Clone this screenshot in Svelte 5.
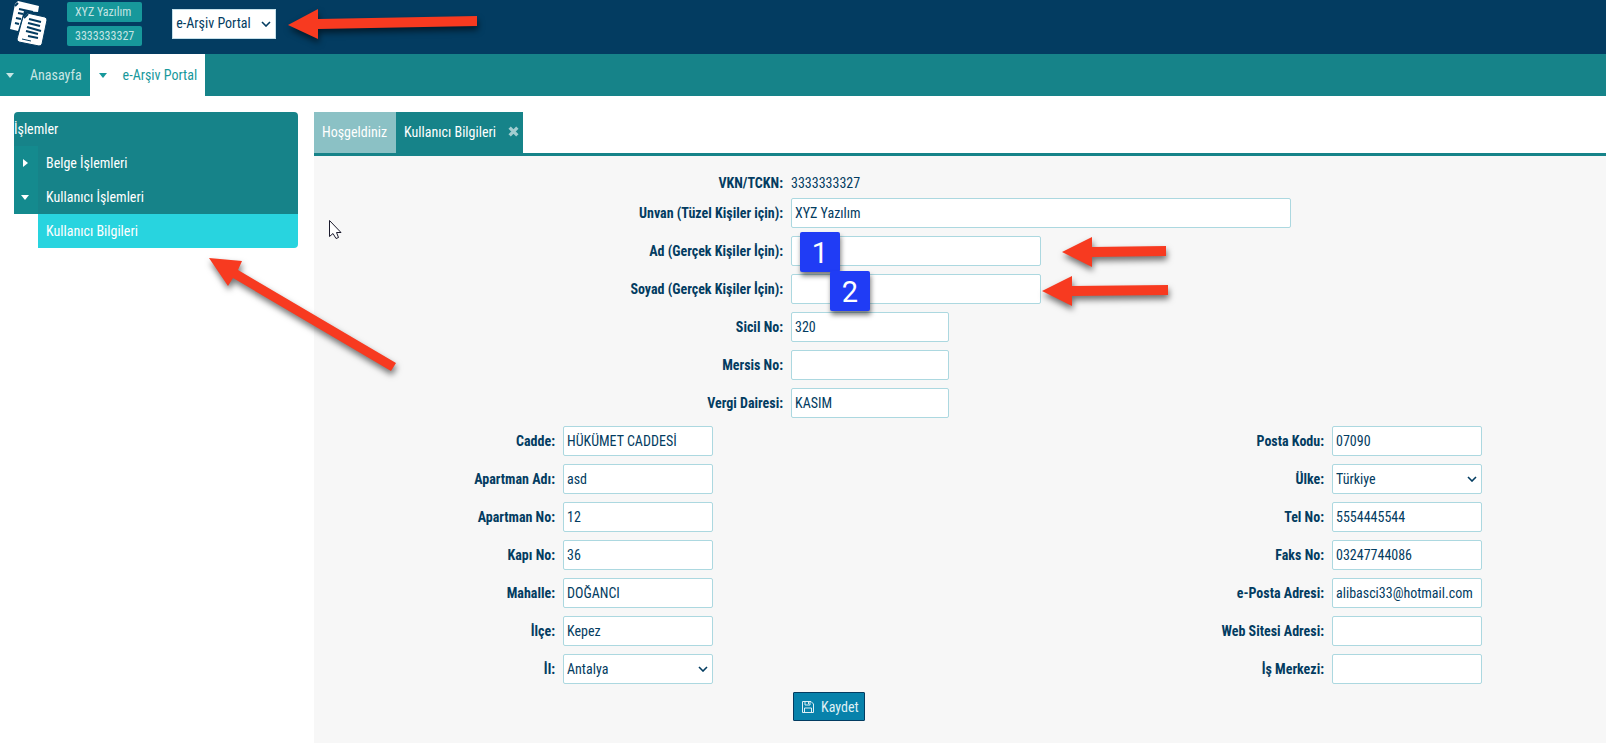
<script lang="ts">
  type Field = { id: string; label: string; value: string; size?: string; badge?: number; options?: string[] };

  const modules = ['e-Arşiv Portal', 'e-Fatura Portal'];

  let module = $state('e-Arşiv Portal');

  let general = $state<Field[]>([
    { id: 'unvan', label: 'Unvan (Tüzel Kişiler için):', value: 'XYZ Yazılım', size: 'wide' },
    { id: 'ad', label: 'Ad (Gerçek Kişiler İçin):', value: '', size: 'medium', badge: 1 },
    { id: 'soyad', label: 'Soyad (Gerçek Kişiler İçin):', value: '', size: 'medium', badge: 2 },
    { id: 'sicil', label: 'Sicil No:', value: '320', size: 'small' },
    { id: 'mersis', label: 'Mersis No:', value: '', size: 'small' },
    { id: 'vergi', label: 'Vergi Dairesi:', value: 'KASIM', size: 'small' }
  ]);

  // address fields run left, right, left, right
  let address = $state<Field[]>([
    { id: 'cadde', label: 'Cadde:', value: 'HÜKÜMET CADDESİ' },
    { id: 'posta', label: 'Posta Kodu:', value: '07090' },
    { id: 'apartman-adi', label: 'Apartman Adı:', value: 'asd' },
    { id: 'ulke', label: 'Ülke:', value: 'Türkiye', options: ['Türkiye'] },
    { id: 'apartman-no', label: 'Apartman No:', value: '12' },
    { id: 'tel', label: 'Tel No:', value: '5554445544' },
    { id: 'kapi', label: 'Kapı No:', value: '36' },
    { id: 'faks', label: 'Faks No:', value: '03247744086' },
    { id: 'mahalle', label: 'Mahalle:', value: 'DOĞANCI' },
    { id: 'eposta', label: 'e-Posta Adresi:', value: 'alibasci33@hotmail.com' },
    { id: 'ilce', label: 'İlçe:', value: 'Kepez' },
    { id: 'web', label: 'Web Sitesi Adresi:', value: '' },
    { id: 'il', label: 'İl:', value: 'Antalya', options: ['Antalya'] },
    { id: 'merkez', label: 'İş Merkezi:', value: '' }
  ]);
</script>

{#snippet chevron()}
  <svg class="chevron" viewBox="0 0 10 6" aria-hidden="true">
    <path d="M1 1l4 4 4-4" fill="none" stroke="currentColor" stroke-width="1.600" />
  </svg>
{/snippet}

<div class="page">
  <header class="topbar">
    <svg class="logo" viewBox="8 0 40 48" aria-hidden="true">
      <path d="M18 1L39 6L38 12L24 11L18 31L10 29L15 4Z" fill="#fff" />
      <path d="M15 6L18 3M19 9L33 12M18 13L23 14M16 18L21 19M15 23L19 24" stroke="#033c61" stroke-width="2" fill="none" />
      <path d="M27 13L45 17Q47 18 47 20L42 44Q41 46 39 46L19 42Q17 41 17 39L23 17Z" fill="#fff" stroke="#033c61" stroke-width="1" />
      <path
        d="M24 18L28 14M29 19L41 22M28 23L40 26M27 27L41 31M26 31L38 34M28 36L38 38"
        stroke="#033c61"
        stroke-width="2"
        fill="none"
      />
      <path d="M22 39L31 41" stroke="#033c61" stroke-width="1" />
    </svg>
    <div class="company">
      <span>XYZ Yazılım</span>
      <span>3333333327</span>
    </div>
    <div class="module">
      <select aria-label="Modül" bind:value={module}>
        {#each modules as name}
          <option>{name}</option>
        {/each}
      </select>
      {@render chevron()}
    </div>
  </header>

  <nav class="menu">
    <a href="#anasayfa"><i class="caret down"></i>Anasayfa</a>
    <a class="active" href="#earsiv"><i class="caret down"></i>e-Arşiv Portal</a>
  </nav>

  <div class="body">
    <aside class="sidebar">
      <h2>İşlemler</h2>
      <a class="item" href="#belge"><span class="toggle"><i class="caret right"></i></span>Belge İşlemleri</a>
      <a class="item" href="#kullanici"><span class="toggle"><i class="caret down"></i></span>Kullanıcı İşlemleri</a>
      <a class="sub" href="#bilgiler">Kullanıcı Bilgileri</a>
    </aside>

    <main>
      <div class="tabs">
        <button type="button" class="tab idle">Hoşgeldiniz</button>
        <div class="tab">
          <button type="button">Kullanıcı Bilgileri</button>
          <button type="button" class="close" aria-label="Kapat">
            <svg viewBox="0 0 10 10"><path d="M1.500 1.500l7 7M8.500 1.500l-7 7" stroke="currentColor" stroke-width="3" /></svg>
          </button>
        </div>
      </div>

      <form onsubmit={(e) => e.preventDefault()}>
        <div class="general taxpayer">
          <span class="label">VKN/TCKN:</span>
          <span>3333333327</span>
        </div>

        <div class="general">
          {#each general as field}
            <label class="label" for={field.id}>{field.label}</label>
            <div class="control {field.size}">
              <input id={field.id} type="text" bind:value={field.value} />
              {#if field.badge}
                <span class="badge n{field.badge}">{field.badge}</span>
              {/if}
            </div>
          {/each}
        </div>

        <div class="address">
          {#each address as field}
            <label class="label" for={field.id}>{field.label}</label>
            <div class="control">
              {#if field.options}
                <select id={field.id} bind:value={field.value}>
                  {#each field.options as option}
                    <option>{option}</option>
                  {/each}
                </select>
                {@render chevron()}
              {:else}
                <input id={field.id} type="text" bind:value={field.value} />
              {/if}
            </div>
          {/each}
        </div>

        <div class="actions">
          <button type="submit" class="save">
            <svg viewBox="0 0 12 12" fill="none" stroke="currentColor" aria-hidden="true">
              <path d="M.5.5h8.500l2.500 2.500v8.500H.5z" />
              <path d="M3 .5v3.500h5V.5M6.500 1v2M2.500 11.500v-4.500h7v4.500" />
            </svg>
            Kaydet
          </button>
        </div>
      </form>
    </main>
  </div>

  <div class="notes" aria-hidden="true">
    <svg width="1606" height="743">
      <g class="arrows">
        <path d="M288 25L318 9V19L477 16V26L318 29V39Z" />
        <path d="M209 258L242 261L238 270L396 363L391 371L233 278L228 286Z" />
        <path d="M1062 252L1092 237V247L1166 246V256L1092 257V267Z" />
        <path d="M1042 291L1072 276V286L1168 285V295L1072 296V306Z" />
      </g>
      <path class="cursor" d="M329.500 220.500V236.500L333 233.500L336 238.500L338.500 237.500L336.500 232.500H341Z" />
    </svg>
  </div>
</div>

<style>
  :global(body) {
    margin: 0;
  }

  .page {
    position: relative;
    display: flex;
    flex-direction: column;
    min-height: 100vh;
    background: #fff;
    color: #033c61;
    font-family: 'Roboto Condensed', 'Liberation Sans Narrow', Roboto, sans-serif;
    font-size: 14px;
    line-height: 20px;
  }

  .page * {
    box-sizing: border-box;
  }

  a {
    color: inherit;
    text-decoration: none;
  }

  button,
  input,
  select {
    font: inherit;
    color: inherit;
  }

  select {
    appearance: none;
  }

  .chevron {
    position: absolute;
    top: 12px;
    right: 5px;
    width: 10px;
    height: 6px;
    pointer-events: none;
  }

  .topbar {
    display: flex;
    align-items: flex-start;
    height: 54px;
    background: #033c61;
  }

  .logo {
    width: 40px;
    height: 48px;
    margin-left: 8px;
  }

  .company {
    display: flex;
    flex-direction: column;
    gap: 4px;
    margin: 2px 0 0 19px;
  }

  .company span {
    padding: 0 8px;
    border-radius: 2px;
    background: #17989b;
    color: #c4e4e4;
    font-size: 12px;
  }

  .module {
    position: relative;
    width: 104px;
    height: 30px;
    margin: 9px 0 0 30px;
  }

  .module select {
    width: 100%;
    height: 30px;
    padding: 0 3px 2px;
    border: 1px solid #c5e0ea;
    background: #fff;
  }

  .menu {
    display: flex;
    height: 42px;
    background: #168389;
    color: #c8e6e4;
  }

  .menu a {
    display: flex;
    align-items: center;
    gap: 16px;
    padding: 0 8px 0 6px;
    background: #148e92;
  }

  .menu a.active {
    padding-left: 9px;
    background: #fff;
    color: #17989b;
  }

  .caret {
    display: inline-block;
    border: 4px solid transparent;
  }

  .caret.down {
    border-top: 5px solid currentColor;
    border-bottom-width: 0;
  }

  .caret.right {
    border-left: 5px solid currentColor;
    border-right-width: 0;
  }

  .body {
    display: flex;
    flex: 1;
    gap: 16px;
    padding: 16px 0 0 14px;
  }

  .sidebar {
    flex: 0 0 284px;
    color: #fff;
  }

  .sidebar h2 {
    margin: 0;
    border-radius: 4px 4px 0 0;
    background: #168389;
    font-size: 14px;
    font-weight: 400;
    line-height: 34px;
  }

  .item {
    display: flex;
    align-items: center;
    gap: 8px;
    height: 34px;
    background: #168389;
  }

  .toggle {
    display: flex;
    align-items: center;
    align-self: stretch;
    justify-content: center;
    width: 24px;
    padding-right: 2px;
    background: #148a8e;
  }

  .sub {
    display: block;
    margin-left: 24px;
    padding-left: 8px;
    border-radius: 0 0 4px 0;
    background: #28d4df;
    line-height: 34px;
  }

  main {
    display: flex;
    flex-direction: column;
    flex: 1;
    min-width: 0;
  }

  .tabs {
    display: flex;
    border-bottom: 3px solid #168389;
  }

  .tab {
    display: flex;
    align-items: center;
    gap: 12px;
    height: 41px;
    padding: 0 4px 2px 8px;
    background: #168389;
    color: #fff;
  }

  .tab.idle {
    padding: 0 9px 2px 8px;
    border: 0;
    background: #8bc1c5;
  }

  .tab button {
    padding: 0;
    border: 0;
    background: none;
  }

  .tab .close {
    display: flex;
    color: #a2cdd0;
  }

  .close svg {
    width: 11px;
    height: 11px;
  }

  form {
    flex: 1;
    padding: 17px 0;
    background: #f7f7f7;
  }

  .general,
  .address {
    display: grid;
    row-gap: 8px;
    align-items: center;
  }

  .general {
    grid-template-columns: 477fr 815fr;
    margin-bottom: 8px;
  }

  .general.taxpayer {
    margin-bottom: 5px;
  }

  .address {
    grid-template-columns: 249fr 520fr 249fr 274fr;
  }

  .label {
    padding-right: 8px;
    font-weight: 700;
    text-align: right;
  }

  .control {
    position: relative;
    width: 150px;
    height: 30px;
  }

  .control.wide {
    width: 500px;
  }

  .control.medium {
    width: 250px;
  }

  .control.small {
    width: 158px;
  }

  .control input,
  .control select {
    display: block;
    width: 100%;
    height: 30px;
    padding: 0 3px;
    border: 1px solid #acd8e0;
    border-radius: 2px;
    background: #fff;
  }

  .badge {
    position: absolute;
    z-index: 1;
    width: 40px;
    height: 40px;
    border-radius: 2px;
    background: #203cf5;
    box-shadow: 1px 4px 5px rgba(0, 0, 0, 0.5);
    color: #fff;
    font: 29px/42px Roboto, sans-serif;
    text-align: center;
  }

  .badge.n1 {
    top: -4px;
    left: 9px;
  }

  .badge.n2 {
    top: -3px;
    left: 39px;
  }

  .actions {
    display: flex;
    margin-top: 8px;
    padding-left: calc(100% * 477 / 1292 + 2px);
  }

  .save {
    display: flex;
    align-items: center;
    gap: 7px;
    height: 29px;
    padding: 0 5px 0 8px;
    border: 1px solid #033c61;
    border-radius: 1px;
    background: #0782ab;
    color: #dff0f5;
  }

  .save svg {
    width: 12px;
    height: 12px;
  }

  .notes {
    position: absolute;
    inset: 0;
    z-index: 2;
    overflow: hidden;
    pointer-events: none;
  }

  .notes svg {
    display: block;
  }

  .arrows {
    fill: #f73a20;
    filter: drop-shadow(1px 4px 3px rgba(0, 0, 0, 0.55));
  }

  .cursor {
    fill: #fff;
    stroke: #1a1a2c;
  }
</style>
